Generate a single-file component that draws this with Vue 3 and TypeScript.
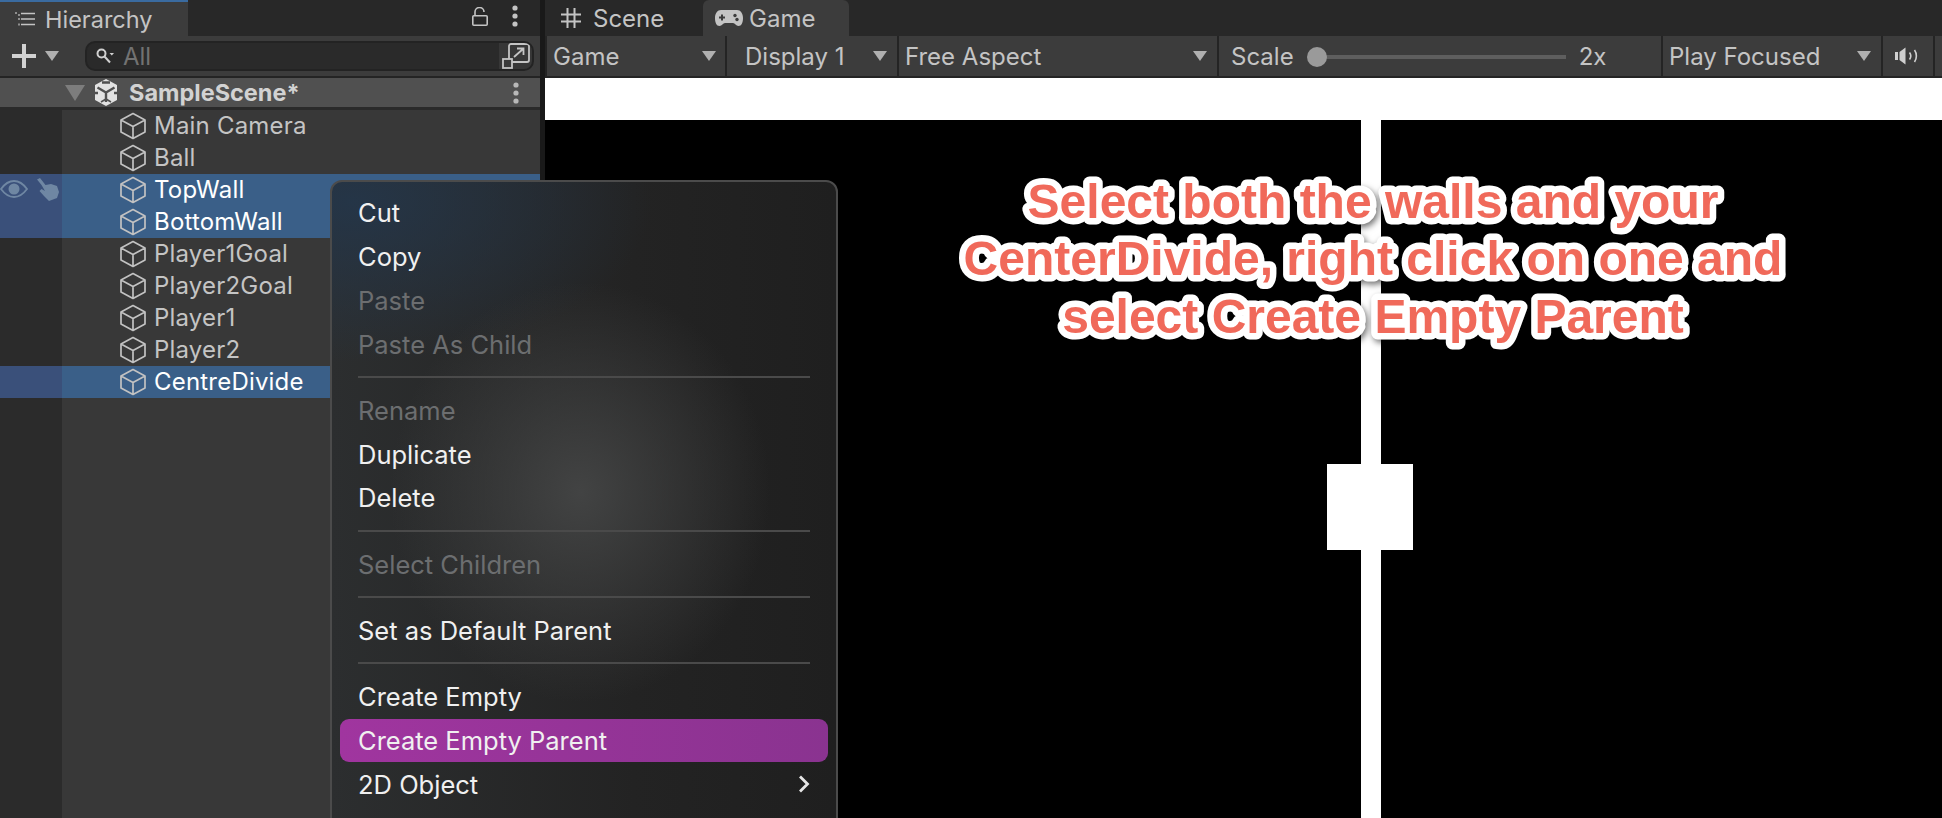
<template>
  <div class="editor">
    <section class="hierarchy">
      <div class="tabbar">
        <div class="tab hier-tab">
          <svg class="ic-list" viewBox="0 0 20 16" width="20" height="16">
            <path d="M6 2.500h14M6 8h14M6 13.500h14" stroke="#c4c4c4" stroke-width="1.700" fill="none" />
            <path d="M0 1h2v2H0zM3 3h2v2H3zM3 7h2v2H3zM3 12.500h2v2H3z" fill="#8f8f8f" />
          </svg>
          <span>Hierarchy</span>
        </div>
        <div class="tab-tools">
          <svg viewBox="0 0 16 19" width="16" height="19">
            <path d="M3 8V5a4.500 4.500 0 0 1 9 0" stroke="#c4c4c4" stroke-width="1.600" fill="none" />
            <rect x="0.8" y="8.8" width="14.400" height="9.400" rx="1" stroke="#c4c4c4" stroke-width="1.600" fill="none" />
          </svg>
          <svg viewBox="0 0 6 22" width="6" height="22">
            <circle cx="3" cy="3" r="2.600" fill="#c4c4c4" />
            <circle cx="3" cy="11" r="2.600" fill="#c4c4c4" />
            <circle cx="3" cy="19" r="2.600" fill="#c4c4c4" />
          </svg>
        </div>
      </div>

      <div class="hier-toolbar">
        <svg viewBox="0 0 24 24" width="24" height="24">
          <path d="M12 0v24M0 12h24" stroke="#d2d2d2" stroke-width="4" />
        </svg>
        <span class="tri tri-light"></span>
        <div class="search">
          <svg class="ic-search" viewBox="0 0 18 17" width="18" height="17">
            <circle cx="5.500" cy="5.500" r="4" stroke="#d0d0d0" stroke-width="2" fill="none" />
            <path d="M8.500 8.500l5.500 6" stroke="#d0d0d0" stroke-width="2" />
            <path d="M13.500 5h4.500l-2.200 2.600z" fill="#d0d0d0" />
          </svg>
          <span class="search-text">All</span>
          <div class="search-btn">
            <svg viewBox="0 0 28 26" width="28" height="26">
              <rect x="7" y="1" width="20" height="18" rx="2" stroke="#c4c4c4" stroke-width="1.800" fill="none" />
              <rect x="1" y="16" width="9" height="9" fill="#3a3a3a" stroke="#c4c4c4" stroke-width="1.800" />
              <path d="M12 14l9-8M15 5.500h6.500V12" stroke="#c4c4c4" stroke-width="1.800" fill="none" />
            </svg>
          </div>
        </div>
      </div>

      <div class="scene-row">
        <span class="tri tri-dim"></span>
        <svg class="unity" viewBox="0 0 24 27" width="24" height="27">
          <path d="M12 0l11 6v15l-11 6-11-6V6z" fill="#e2e2e2" />
          <path d="M12 13.500V23M12 13.500L3.500 8.500M12 13.500l8.500-5M0 14h4M20 14h4M8 3.500h8" stroke="#505050" stroke-width="2.400" fill="none" />
          <path d="M7 23l5-3 5 3" stroke="#505050" stroke-width="1.600" fill="none" />
        </svg>
        <span class="scene-name">SampleScene*</span>
        <svg class="row-kebab" viewBox="0 0 6 22" width="6" height="22">
          <circle cx="3" cy="3" r="2.600" fill="#b8b8b8" />
          <circle cx="3" cy="11" r="2.600" fill="#b8b8b8" />
          <circle cx="3" cy="19" r="2.600" fill="#b8b8b8" />
        </svg>
      </div>

      <div class="tree">
        <div
          v-for="row in rows"
          :key="row.name"
          class="tree-row"
          :class="{ selected: row.selected }"
        >
          <div class="gutter">
            <template v-if="row.name === 'TopWall'">
              <svg class="eye" viewBox="0 0 28 18" width="28" height="18">
                <path d="M1 9c4-5.500 8-8 13-8s9 2.500 13 8c-4 5.500-8 8-13 8s-9-2.500-13-8z" stroke="#6f87a3" stroke-width="1.800" fill="none" />
                <circle cx="14" cy="9" r="5.500" fill="#6f87a3" />
              </svg>
              <svg class="hand" viewBox="0 0 23 23" width="23" height="23">
                <path d="M1 1.500L4 0l5.500 7 5.500-1 6 2 2 6-2 6-8 3-5-5-4.500-5 2-2 3.500 2-3.500-6z" fill="#6f87a3" />
              </svg>
            </template>
          </div>
          <svg class="cube" viewBox="0 0 26 28" width="26" height="28">
            <path d="M13 1.500l12 6.500v12l-12 6.500L1 20V8zM1 8l12 6.500L25 8M13 14.500v12" stroke="#c2c2c2" stroke-width="1.700" stroke-linejoin="round" fill="none" />
          </svg>
          <span class="row-name">{{ row.name }}</span>
        </div>
      </div>
    </section>

    <div class="split"></div>

    <section class="game">
      <div class="tabbar">
        <div class="tab scene-tab">
          <svg viewBox="0 0 20 20" width="20" height="20">
            <path d="M6.500 0v20M13.500 0v20M0 6.500h20M0 13.500h20" stroke="#c4c4c4" stroke-width="2" />
          </svg>
          <span>Scene</span>
        </div>
        <div class="tab game-tab">
          <svg viewBox="0 0 28 18" width="28" height="18">
            <path d="M6 1h16c3.500 0 6 3.500 6 8s-1.500 8-4.500 8c-2.500 0-3.500-3-5.500-3H10c-2 0-3 3-5.500 3C1.500 17 0 13.500 0 9s2.500-8 6-8z" fill="#c4c4c4" />
            <path d="M4 8.500h6M7 5.500v6" stroke="#3c3c3c" stroke-width="2" />
            <circle cx="20" cy="6.500" r="1.700" fill="#3c3c3c" />
            <circle cx="22" cy="10.500" r="1.700" fill="#3c3c3c" />
          </svg>
          <span>Game</span>
        </div>
      </div>

      <div class="game-toolbar">
        <div class="seg seg-game"><span>Game</span><i class="tri"></i></div>
        <div class="seg seg-display"><span>Display 1</span><i class="tri"></i></div>
        <div class="seg seg-aspect"><span>Free Aspect</span><i class="tri"></i></div>
        <div class="seg seg-scale">
          <span>Scale</span>
          <div class="slider"><b class="thumb"></b></div>
          <span>2x</span>
        </div>
        <div class="seg seg-play"><span>Play Focused</span><i class="tri"></i></div>
        <div class="seg seg-audio">
          <svg viewBox="0 0 26 18" width="26" height="18">
            <path d="M0 5h3v8H0zM4.500 5l6-4.500v17l-6-4.500z" fill="#d0d0d0" />
            <path d="M14.500 5.500c1.500 2 1.500 5 0 7M19.500 3c2.500 3.500 2.500 8.500 0 12" stroke="#d0d0d0" stroke-width="1.600" fill="none" />
          </svg>
        </div>
        <div class="seg seg-end"></div>
      </div>

      <div class="viewport">
        <div class="top-wall"></div>
        <div class="divider"></div>
        <div class="ball"></div>
        <svg class="note">
          <text text-anchor="middle">
            <tspan x="828" y="140">Select both the walls and your</tspan>
            <tspan x="828" y="197">CenterDivide, right click on one and</tspan>
            <tspan x="828" y="255">select Create Empty Parent</tspan>
          </text>
        </svg>
      </div>
    </section>

    <div class="menu">
      <template v-for="(item, i) in menu" :key="i">
        <div v-if="item.sep" class="menu-sep"></div>
        <div
          v-else
          class="menu-item"
          :class="{ disabled: item.disabled, active: item.active }"
        >
          <span>{{ item.label }}</span>
          <svg v-if="item.arrow" class="chev" viewBox="0 0 12 18" width="12" height="18">
            <path d="M2 1.500L9.500 9 2 16.500" stroke="#e6e6e6" stroke-width="2.800" fill="none" />
          </svg>
        </div>
      </template>
    </div>
  </div>
</template>

<script setup lang="ts">
type Row = { name: string; selected?: boolean };
type MenuItem = {
  label?: string;
  sep?: boolean;
  disabled?: boolean;
  active?: boolean;
  arrow?: boolean;
};

const rows: Row[] = [
  { name: 'Main Camera' },
  { name: 'Ball' },
  { name: 'TopWall', selected: true },
  { name: 'BottomWall', selected: true },
  { name: 'Player1Goal' },
  { name: 'Player2Goal' },
  { name: 'Player1' },
  { name: 'Player2' },
  { name: 'CentreDivide', selected: true },
];

const menu: MenuItem[] = [
  { label: 'Cut' },
  { label: 'Copy' },
  { label: 'Paste', disabled: true },
  { label: 'Paste As Child', disabled: true },
  { sep: true },
  { label: 'Rename', disabled: true },
  { label: 'Duplicate' },
  { label: 'Delete' },
  { sep: true },
  { label: 'Select Children', disabled: true },
  { sep: true },
  { label: 'Set as Default Parent' },
  { sep: true },
  { label: 'Create Empty' },
  { label: 'Create Empty Parent', active: true },
  { label: '2D Object', arrow: true },
];
</script>

<style>
html,
body {
  margin: 0;
  background: #000;
  overflow: hidden;
}
</style>

<style scoped>
.editor {
  position: relative;
  display: flex;
  width: 1942px;
  height: 818px;
  overflow: hidden;
  background: #000;
  font-family: Inter, "Liberation Sans", sans-serif;
  font-size: 24px;
  color: #c4c4c4;
}
.hierarchy {
  width: 540px;
  flex: none;
  display: flex;
  flex-direction: column;
  background: #383838;
}
.split {
  width: 5px;
  flex: none;
  background: #191919;
}
.game {
  flex: 1;
  display: flex;
  flex-direction: column;
  min-width: 0;
}
.tabbar {
  height: 36px;
  flex: none;
  display: flex;
  align-items: stretch;
  background: #282828;
}
.tab {
  display: flex;
  align-items: center;
  box-sizing: border-box;
}
.hier-tab {
  width: 188px;
  padding-left: 15px;
  gap: 10px;
  background: #3c3c3c;
  border-top: 2px solid #3a6ba0;
  font-size: 23.500px;
}
.tab-tools {
  margin-left: auto;
  display: flex;
  align-items: center;
  gap: 24px;
  padding: 0 22px 4px 0;
}
.hier-toolbar {
  height: 40px;
  flex: none;
  display: flex;
  align-items: center;
  padding-left: 12px;
  background: #3c3c3c;
  border-bottom: 2px solid #242424;
}
.tri {
  display: block;
  width: 0;
  height: 0;
  border-left: 7px solid transparent;
  border-right: 7px solid transparent;
  border-top: 10px solid #b0b0b0;
}
.tri-light {
  margin-left: 9px;
}
.search {
  display: flex;
  align-items: center;
  box-sizing: border-box;
  width: 449px;
  height: 30px;
  margin-left: 26px;
  padding-left: 9px;
  background: #2a2a2a;
  border: 2px solid #232323;
  border-radius: 10px;
  overflow: hidden;
}
.search-text {
  margin-left: 9px;
  color: #727272;
}
.search-btn {
  display: flex;
  align-items: center;
  justify-content: center;
  margin-left: auto;
  width: 33px;
  height: 100%;
  background: #373737;
}
.scene-row {
  height: 29px;
  flex: none;
  display: flex;
  align-items: center;
  padding-left: 65px;
  background: #505050;
  border-bottom: 3px solid #2a2a2a;
  font-size: 23.500px;
}
.tri-dim {
  border-left-width: 10px;
  border-right-width: 10px;
  border-top: 16px solid #7d7d7d;
}
.unity {
  margin-left: 9px;
}
.scene-name {
  margin-left: 11px;
  font-weight: 700;
  color: #d2d2d2;
}
.row-kebab {
  margin-left: auto;
  margin-right: 21px;
}
.tree {
  flex: 1;
  background: linear-gradient(to right, #2b2b2b 62px, #383838 62px);
}
.tree-row {
  display: flex;
  align-items: center;
  height: 32px;
}
.gutter {
  position: relative;
  width: 62px;
  height: 100%;
  flex: none;
}
.tree-row.selected {
  background: #3a5f88;
  color: #fff;
}
.tree-row.selected .gutter {
  background: #3a507a;
}
.eye {
  position: absolute;
  left: 0;
  top: 6px;
}
.hand {
  position: absolute;
  left: 36px;
  top: 4px;
}
.cube {
  margin-left: 58px;
  flex: none;
}
.row-name {
  margin: -2px 0 0 8px;
  letter-spacing: 0.2px;
}
.scene-tab {
  width: 158px;
  padding-left: 16px;
  gap: 12px;
}
.game-tab {
  width: 146px;
  padding-left: 12px;
  gap: 6px;
  background: #3c3c3c;
  border-radius: 6px 6px 0 0;
}
.game-toolbar {
  height: 42px;
  flex: none;
  display: flex;
  gap: 2px;
  padding-left: 2px;
  background: #242424;
}
.seg {
  box-sizing: border-box;
  height: 40px;
  display: flex;
  align-items: center;
  flex: none;
  background: #3c3c3c;
}
.seg .tri {
  margin-left: auto;
}
.seg-game {
  width: 178px;
  padding: 0 9px 0 6px;
}
.seg-display {
  width: 170px;
  padding: 0 10px 0 18px;
}
.seg-aspect {
  width: 318px;
  padding: 0 10px 0 6px;
}
.seg-scale {
  width: 442px;
  padding-left: 12px;
}
.slider {
  position: relative;
  width: 253px;
  height: 4px;
  margin: 2px 13px 0 19px;
  background: #5e5e5e;
}
.thumb {
  position: absolute;
  left: -6px;
  top: -8px;
  width: 20px;
  height: 20px;
  border-radius: 50%;
  background: #9a9a9a;
}
.seg-play {
  width: 218px;
  padding: 0 10px 0 6px;
}
.seg-audio {
  width: 50px;
  justify-content: center;
}
.seg-end {
  flex: 1;
}
.viewport {
  position: relative;
  flex: 1;
  overflow: hidden;
  background: #000;
}
.top-wall {
  height: 42px;
  background: #fff;
}
.divider {
  position: absolute;
  left: 816px;
  top: 42px;
  bottom: 0;
  width: 20px;
  background: #fff;
}
.ball {
  position: absolute;
  left: 782px;
  top: 386px;
  width: 86px;
  height: 86px;
  background: #fff;
}
.note {
  position: absolute;
  left: 0;
  top: 0;
  width: 100%;
  height: 100%;
  font-family: "Liberation Sans", Arial, sans-serif;
  font-size: 48px;
  font-weight: 700;
  fill: #f0695a;
  stroke: #fff;
  stroke-width: 13px;
  stroke-linejoin: round;
  paint-order: stroke fill;
  filter: drop-shadow(2px 3px 3px rgba(0, 0, 0, 0.55));
}
.menu {
  position: absolute;
  left: 330px;
  top: 180px;
  box-sizing: border-box;
  width: 508px;
  height: 700px;
  padding: 9px 8px;
  border: 2px solid #4b4b4b;
  border-radius: 12px;
  background:
    radial-gradient(ellipse 190px 210px at 248px 310px, rgba(68, 69, 69, 0.95), rgba(68, 69, 69, 0) 100%),
    radial-gradient(ellipse 300px 160px at 20px 20px, rgba(36, 54, 74, 0.9), rgba(36, 54, 74, 0) 100%),
    linear-gradient(to right, #2c2e2f, #232323 60%, #1f1f1f);
  color: #f0f0f0;
  font-size: 25.500px;
}
.menu-item {
  display: flex;
  align-items: center;
  justify-content: space-between;
  height: 43.750px;
  padding: 0 18px;
  border-radius: 9px;
}
.menu-item.disabled {
  color: #6c6e70;
}
.menu-item.active {
  background: linear-gradient(to right, #a0359f, #8a3390);
}
.menu-sep {
  height: 2px;
  margin: 9.750px 18px 10.750px;
  background: #4a4a4a;
}
.chev {
  margin-right: 0;
}
</style>
